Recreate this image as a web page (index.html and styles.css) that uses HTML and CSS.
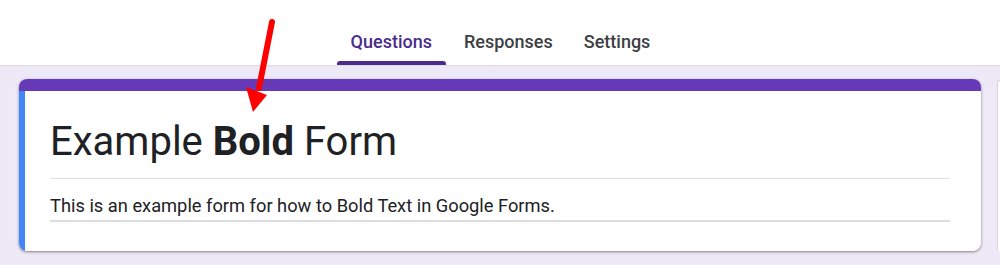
FILE: index.html
```html
<!DOCTYPE html>
<html lang="en">
<head>
  <meta charset="UTF-8">
  <meta name="viewport" content="width=device-width, initial-scale=1.0">
  <title>Example Bold Form</title>
  <link rel="stylesheet" href="styles.css">
</head>
<body>

  <header class="top-bar">
    <nav class="tabs">
      <a class="tab active" href="#">Questions</a>
      <a class="tab" href="#">Responses</a>
      <a class="tab" href="#">Settings</a>
    </nav>
  </header>

  <main class="editor">
    <section class="form-card">
      <div class="card-band"></div>
      <div class="card-body">
        <h1 class="form-title">Example <b>Bold</b> Form</h1>
        <p class="form-desc">This is an example form for how to Bold Text in Google Forms.</p>
      </div>
    </section>
    <aside class="side-tools"></aside>
  </main>

  <!-- annotation arrow -->
  <svg class="arrow" width="1000" height="265" viewBox="0 0 1000 265">
    <line x1="272" y1="22" x2="259" y2="88" stroke="#ff0000" stroke-width="6" stroke-linecap="round"/>
    <polygon points="246,87 267,95 253,112" fill="#ff0000"/>
  </svg>

</body>
</html>
```

FILE: styles.css
```css
/* Global Styles */
body {
    font-family: Roboto, "Liberation Sans", Arial, sans-serif;
    margin: 0;
    padding: 0;
    background-color: #ede9f7;
    height: 265px;
    overflow: hidden;
    position: relative;
}

/* Top bar with tabs */
.top-bar {
    height: 65px;
    background-color: #ffffff;
    border-bottom: 1px solid #dadce0;
    display: flex;
    justify-content: center;
    align-items: flex-end;
}

.tabs {
    display: flex;
    gap: 5px;
}

.tab {
    position: relative;
    padding: 0 13px 11px;
    font-size: 18px;
    line-height: 24px;
    font-weight: 500;
    color: #3c4043;
    text-decoration: none;
}

.tab.active {
    padding: 0 14px 11px;
    color: #4a2c89;
}

.tab.active::after {
    content: "";
    position: absolute;
    left: 0;
    right: 0;
    bottom: 0;
    height: 4px;
    background-color: #4b2c8a;
    border-radius: 3px 3px 0 0;
}

/* Editor area */
.editor {
    display: flex;
    align-items: flex-start;
    gap: 16px;
    padding: 13px 0 0 19px;
}

.form-card {
    width: 962px;
    flex-shrink: 0;
    background-color: #ffffff;
    border-radius: 8px;
    overflow: hidden;
    box-shadow: 0 1px 2px rgba(0, 0, 0, 0.3), 0 1px 3px 1px rgba(0, 0, 0, 0.12);
}

.card-band {
    height: 12px;
    background-color: #673ab7;
}

.card-body {
    border-left: 6px solid #4285f4;
    padding: 27px 31px 29px 25px;
}

.form-title {
    margin: 0;
    padding-bottom: 12px;
    border-bottom: 1px solid #e0e0e0;
    font-size: 40px;
    line-height: 48px;
    font-weight: 400;
    color: #202124;
}

.form-title b {
    font-weight: 700;
}

.form-desc {
    margin: 15px 0 0;
    padding-bottom: 2px;
    border-bottom: 2px solid #dadce0;
    font-size: 18.3px;
    line-height: 24px;
    color: #202124;
}

/* Edge of the floating tool column */
.side-tools {
    width: 2px;
    height: 170px;
    flex-shrink: 0;
    margin-top: 1px;
    background-color: #ffffff;
    border-top: 1px solid #d6d3de;
    border-left: 1px solid #d6d3de;
    border-radius: 8px 0 0 0;
}

.arrow {
    position: absolute;
    top: 0;
    left: 0;
    pointer-events: none;
}
```
